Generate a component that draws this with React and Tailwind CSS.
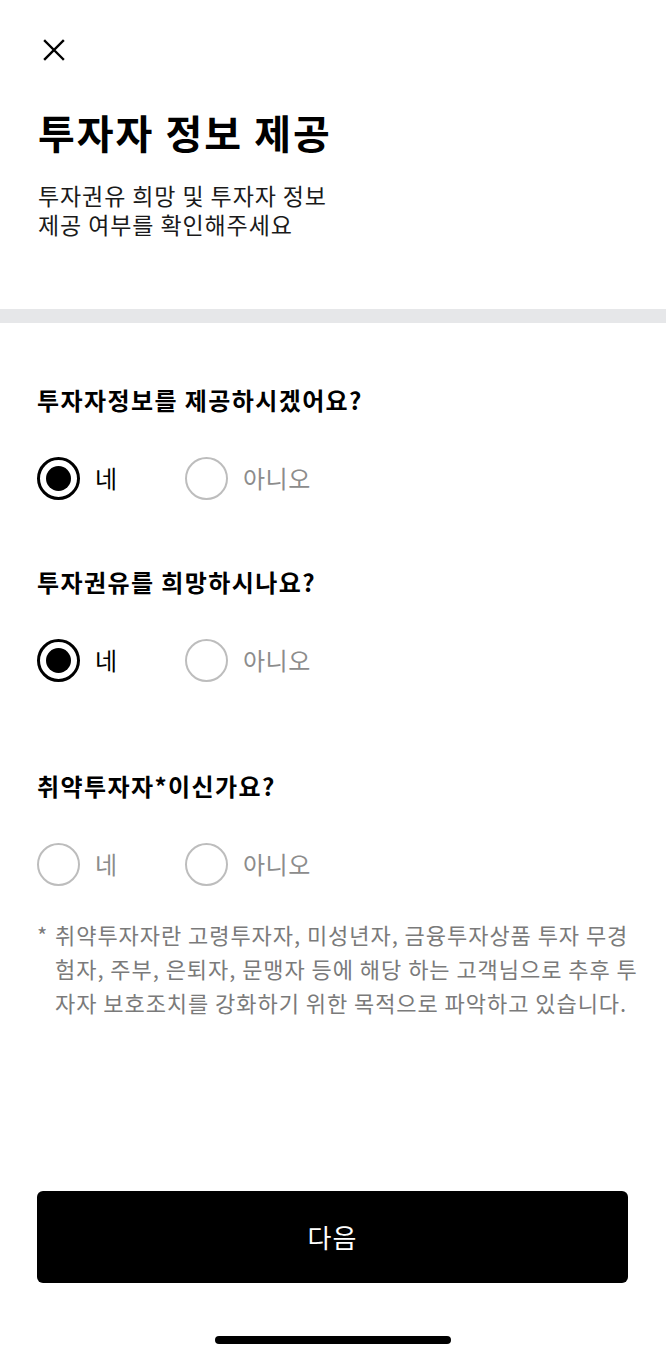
import { useState } from 'react';

const font = { fontFamily: '"Noto Sans CJK KR", "Noto Sans", sans-serif' };

function Radio({ checked, label, onClick }) {
  return (
    <button
      type="button"
      onClick={onClick}
      className="flex items-center gap-[15px] w-[148px] h-[44px] text-left"
    >
      {checked ? (
        <span className="flex items-center justify-center w-[43px] h-[43px] rounded-full border-[3px] border-black">
          <span className="w-[25px] h-[25px] rounded-full bg-black" />
        </span>
      ) : (
        <span className="w-[43px] h-[43px] rounded-full border-2 border-[#bdbdbd]" />
      )}
      <span className={`text-[24px] leading-[32px] tracking-[0.5px] ${checked ? 'text-black' : 'text-[#8c8c8c]'}`}>
        {label}
      </span>
    </button>
  );
}

function Question({ title, value, onChange, className }) {
  return (
    <div className={className}>
      <h2 className="text-[24px] leading-[32px] tracking-[1.4px] font-bold text-black">{title}</h2>
      <div className="flex mt-[40px]">
        <Radio checked={value === 'yes'} label="네" onClick={() => onChange('yes')} />
        <Radio checked={value === 'no'} label="아니오" onClick={() => onChange('no')} />
      </div>
    </div>
  );
}

export default function App() {
  const [provideInfo, setProvideInfo] = useState('yes');
  const [wantSolicit, setWantSolicit] = useState('yes');
  const [vulnerable, setVulnerable] = useState(null);

  return (
    <div className="w-[666px] h-[1359px] bg-white flex flex-col text-black" style={font}>
      {/* Header */}
      <div className="px-[38px] pt-[38px]">
        <button type="button" className="block w-[33px] h-[24px]">
          <svg width="24" height="24" viewBox="0 0 24 24" className="ml-[4px]">
            <path d="M3 3 L21 21 M21 3 L3 21" stroke="black" strokeWidth="2.4" strokeLinecap="square" fill="none" />
          </svg>
        </button>
        <h1 className="mt-[46px] text-[40px] leading-[48px] tracking-[2px] font-bold">투자자 정보 제공</h1>
        <div className="mt-[25px] text-[23px] leading-[29px] tracking-[0.9px] text-[#1a1a1a]">
          <p>투자권유 희망 및 투자자 정보</p>
          <p>제공 여부를 확인해주세요</p>
        </div>
      </div>

      <div className="mt-[70px] h-[14px] bg-[#e6e7e9]" />

      {/* Questions */}
      <div className="px-[37px]">
        <Question
          className="mt-[61px]"
          title="투자자정보를 제공하시겠어요?"
          value={provideInfo}
          onChange={setProvideInfo}
        />
        <Question
          className="mt-[66px]"
          title="투자권유를 희망하시나요?"
          value={wantSolicit}
          onChange={setWantSolicit}
        />
        <Question
          className="mt-[88px]"
          title="취약투자자*이신가요?"
          value={vulnerable}
          onChange={setVulnerable}
        />

        <div className="mt-[31px] flex text-[22px] leading-[34px] tracking-[0.95px] text-[#7a7a7a]">
          <span className="w-[18px] shrink-0">*</span>
          <div className="whitespace-nowrap">
            <p>취약투자자란 고령투자자, 미성년자, 금융투자상품 투자 무경</p>
            <p>험자, 주부, 은퇴자, 문맹자 등에 해당 하는 고객님으로 추후 투</p>
            <p>자자 보호조치를 강화하기 위한 목적으로 파악하고 있습니다.</p>
          </div>
        </div>
      </div>

      <div className="flex-1" />

      {/* Footer */}
      <div className="pl-[37px] pr-[38px]">
        <button
          type="button"
          className="w-full h-[92px] rounded-[6px] bg-black text-white text-[26px] leading-[32px] tracking-[1px]"
        >
          다음
        </button>
      </div>
      <div className="mt-[53px] mb-[15px] flex justify-center">
        <div className="w-[236px] h-[8px] rounded-full bg-black" />
      </div>
    </div>
  );
}
